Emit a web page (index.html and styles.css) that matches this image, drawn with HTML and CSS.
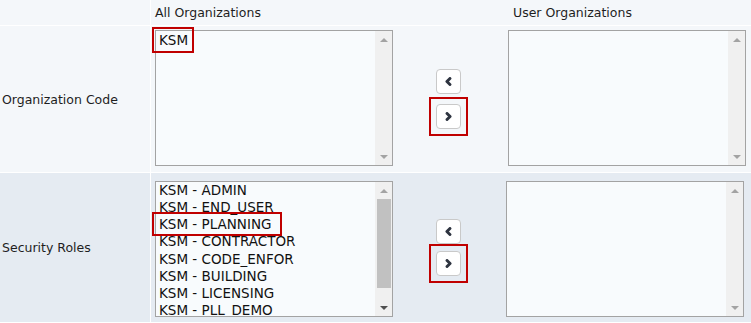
FILE: index.html
```html
<!DOCTYPE html>
<html lang="en">
<head>
    <meta charset="UTF-8">
    <title>User Organizations</title>
    <link rel="stylesheet" href="styles.css">
</head>
<body>
    <div class="form">
        <!-- header -->
        <div class="row head">
            <div class="label"></div>
            <div class="fields">
                <div class="col-left">All Organizations</div>
                <div class="col-mid"></div>
                <div class="col-right">User Organizations</div>
            </div>
        </div>

        <!-- organization code -->
        <div class="row org">
            <div class="label">Organization Code</div>
            <div class="fields">
                <div class="col-left">
                    <div class="listbox">
                        <div class="options">
                            <div class="option"><span class="mark">KSM</span></div>
                        </div>
                        <div class="scrollbar">
                            <div class="arrow up"></div>
                            <div class="track"></div>
                            <div class="arrow down"></div>
                        </div>
                    </div>
                </div>
                <div class="col-mid">
                    <div class="movers">
                        <button class="mover" title="Remove">
                            <svg width="9" height="9" viewBox="0 0 8 8"><path d="M5.3 1.3 L2.6 4 L5.3 6.7" /></svg>
                        </button>
                        <div class="mark-box">
                            <button class="mover" title="Add">
                                <svg width="9" height="9" viewBox="0 0 8 8"><path d="M2.7 1.3 L5.4 4 L2.7 6.7" /></svg>
                            </button>
                        </div>
                    </div>
                </div>
                <div class="col-right">
                    <div class="listbox">
                        <div class="options"></div>
                        <div class="scrollbar">
                            <div class="arrow up"></div>
                            <div class="track"></div>
                            <div class="arrow down"></div>
                        </div>
                    </div>
                </div>
            </div>
        </div>

        <!-- security roles -->
        <div class="row roles">
            <div class="label">Security Roles</div>
            <div class="fields">
                <div class="col-left">
                    <div class="listbox">
                        <div class="options">
                            <div class="option">KSM - ADMIN</div>
                            <div class="option">KSM - END_USER</div>
                            <div class="option"><span class="mark">KSM - PLANNING</span></div>
                            <div class="option">KSM - CONTRACTOR</div>
                            <div class="option">KSM - CODE_ENFOR</div>
                            <div class="option">KSM - BUILDING</div>
                            <div class="option">KSM - LICENSING</div>
                            <div class="option">KSM - PLL_DEMO</div>
                        </div>
                        <div class="scrollbar">
                            <div class="arrow up"></div>
                            <div class="track"><div class="thumb"></div></div>
                            <div class="arrow down on"></div>
                        </div>
                    </div>
                </div>
                <div class="col-mid">
                    <div class="movers">
                        <button class="mover" title="Remove">
                            <svg width="9" height="9" viewBox="0 0 8 8"><path d="M5.3 1.3 L2.6 4 L5.3 6.7" /></svg>
                        </button>
                        <div class="mark-box">
                            <button class="mover" title="Add">
                                <svg width="9" height="9" viewBox="0 0 8 8"><path d="M2.7 1.3 L5.4 4 L2.7 6.7" /></svg>
                            </button>
                        </div>
                    </div>
                </div>
                <div class="col-right">
                    <div class="listbox">
                        <div class="options"></div>
                        <div class="scrollbar">
                            <div class="arrow up"></div>
                            <div class="track"></div>
                            <div class="arrow down"></div>
                        </div>
                    </div>
                </div>
            </div>
        </div>
    </div>
</body>
</html>
```

FILE: styles.css
```css
body {
    margin: 0;
    background: #fff;
    font-family: "DejaVu Sans", Verdana, sans-serif;
    color: #1e1e1e;
}

.form {
    display: flex;
    flex-direction: column;
    gap: 1px;
}

.row {
    display: grid;
    grid-template-columns: 150px 1fr;
    column-gap: 1px;
}

.row > div {
    background: #f4f7fa;
}

.row.roles > div {
    background: #e5ebf2;
}

.head {
    height: 25px;
}

.org {
    height: 146px;
}

.roles {
    height: 149px;
}

.label {
    display: flex;
    align-items: center;
    padding-left: 2px;
    font-size: 12.5px;
}

.fields {
    display: grid;
    grid-template-columns: 249px 96px 1fr;
}

.head .fields {
    align-items: center;
    font-size: 12.5px;
}

.col-left {
    padding-left: 4px;
}

.head .col-right {
    padding-left: 17px;
}

.org .col-left,
.org .col-right {
    padding-top: 4px;
}

.roles .col-left,
.roles .col-right {
    padding-top: 8px;
}

.col-mid {
    display: flex;
    align-items: center;
    justify-content: center;
}

/* list boxes */
.listbox {
    width: 238px;
    height: 136px;
    box-sizing: border-box;
    border: 1px solid #a3a3a3;
    background: #f8fbfd;
    display: flex;
}

.col-right .listbox {
    margin-left: 12px;
}

.roles .col-right .listbox {
    margin-left: 10px;
}

.options {
    flex: 1;
    padding-left: 3px;
    font-size: 13.5px;
    line-height: 17.15px;
    color: #111;
    clip-path: inset(-12px -12px 0 -12px);
}

.option {
    white-space: nowrap;
}

.mark {
    outline: 2px solid #c00000;
    outline-offset: 2px;
    padding: 0 7px 0 3px;
    margin-left: -3px;
}

.org .mark {
    display: inline-block;
    line-height: 18px;
    padding-right: 2px;
}

.scrollbar {
    width: 17px;
    background: #f0f0f0;
    display: flex;
    flex-direction: column;
}

.arrow {
    height: 17px;
    display: flex;
    align-items: center;
    justify-content: center;
}

.arrow::before {
    content: '';
    border-left: 4px solid transparent;
    border-right: 4px solid transparent;
}

.arrow.up::before {
    border-bottom: 4px solid #a3a3a3;
}

.arrow.down::before {
    border-top: 4px solid #a3a3a3;
}

.arrow.down.on::before {
    border-top-color: #505050;
}

.track {
    flex: 1;
}

.thumb {
    margin: 0 1px 0 2px;
    height: 89px;
    background: #c1c1c1;
}

/* move buttons */
.movers {
    display: flex;
    flex-direction: column;
    align-items: center;
    gap: 10px;
}

.roles .movers {
    gap: 7px;
}

.mover {
    width: 25px;
    height: 25px;
    box-sizing: border-box;
    padding: 0;
    border: 1px solid #c9c9c9;
    border-radius: 4px;
    background: #fff;
    display: flex;
    align-items: center;
    justify-content: center;
}

.mover svg path {
    fill: none;
    stroke: #2e3440;
    stroke-width: 2.6;
    stroke-linecap: round;
    stroke-linejoin: round;
}

.mark-box {
    outline: 2px solid #c00000;
    outline-offset: 5px;
}
```
